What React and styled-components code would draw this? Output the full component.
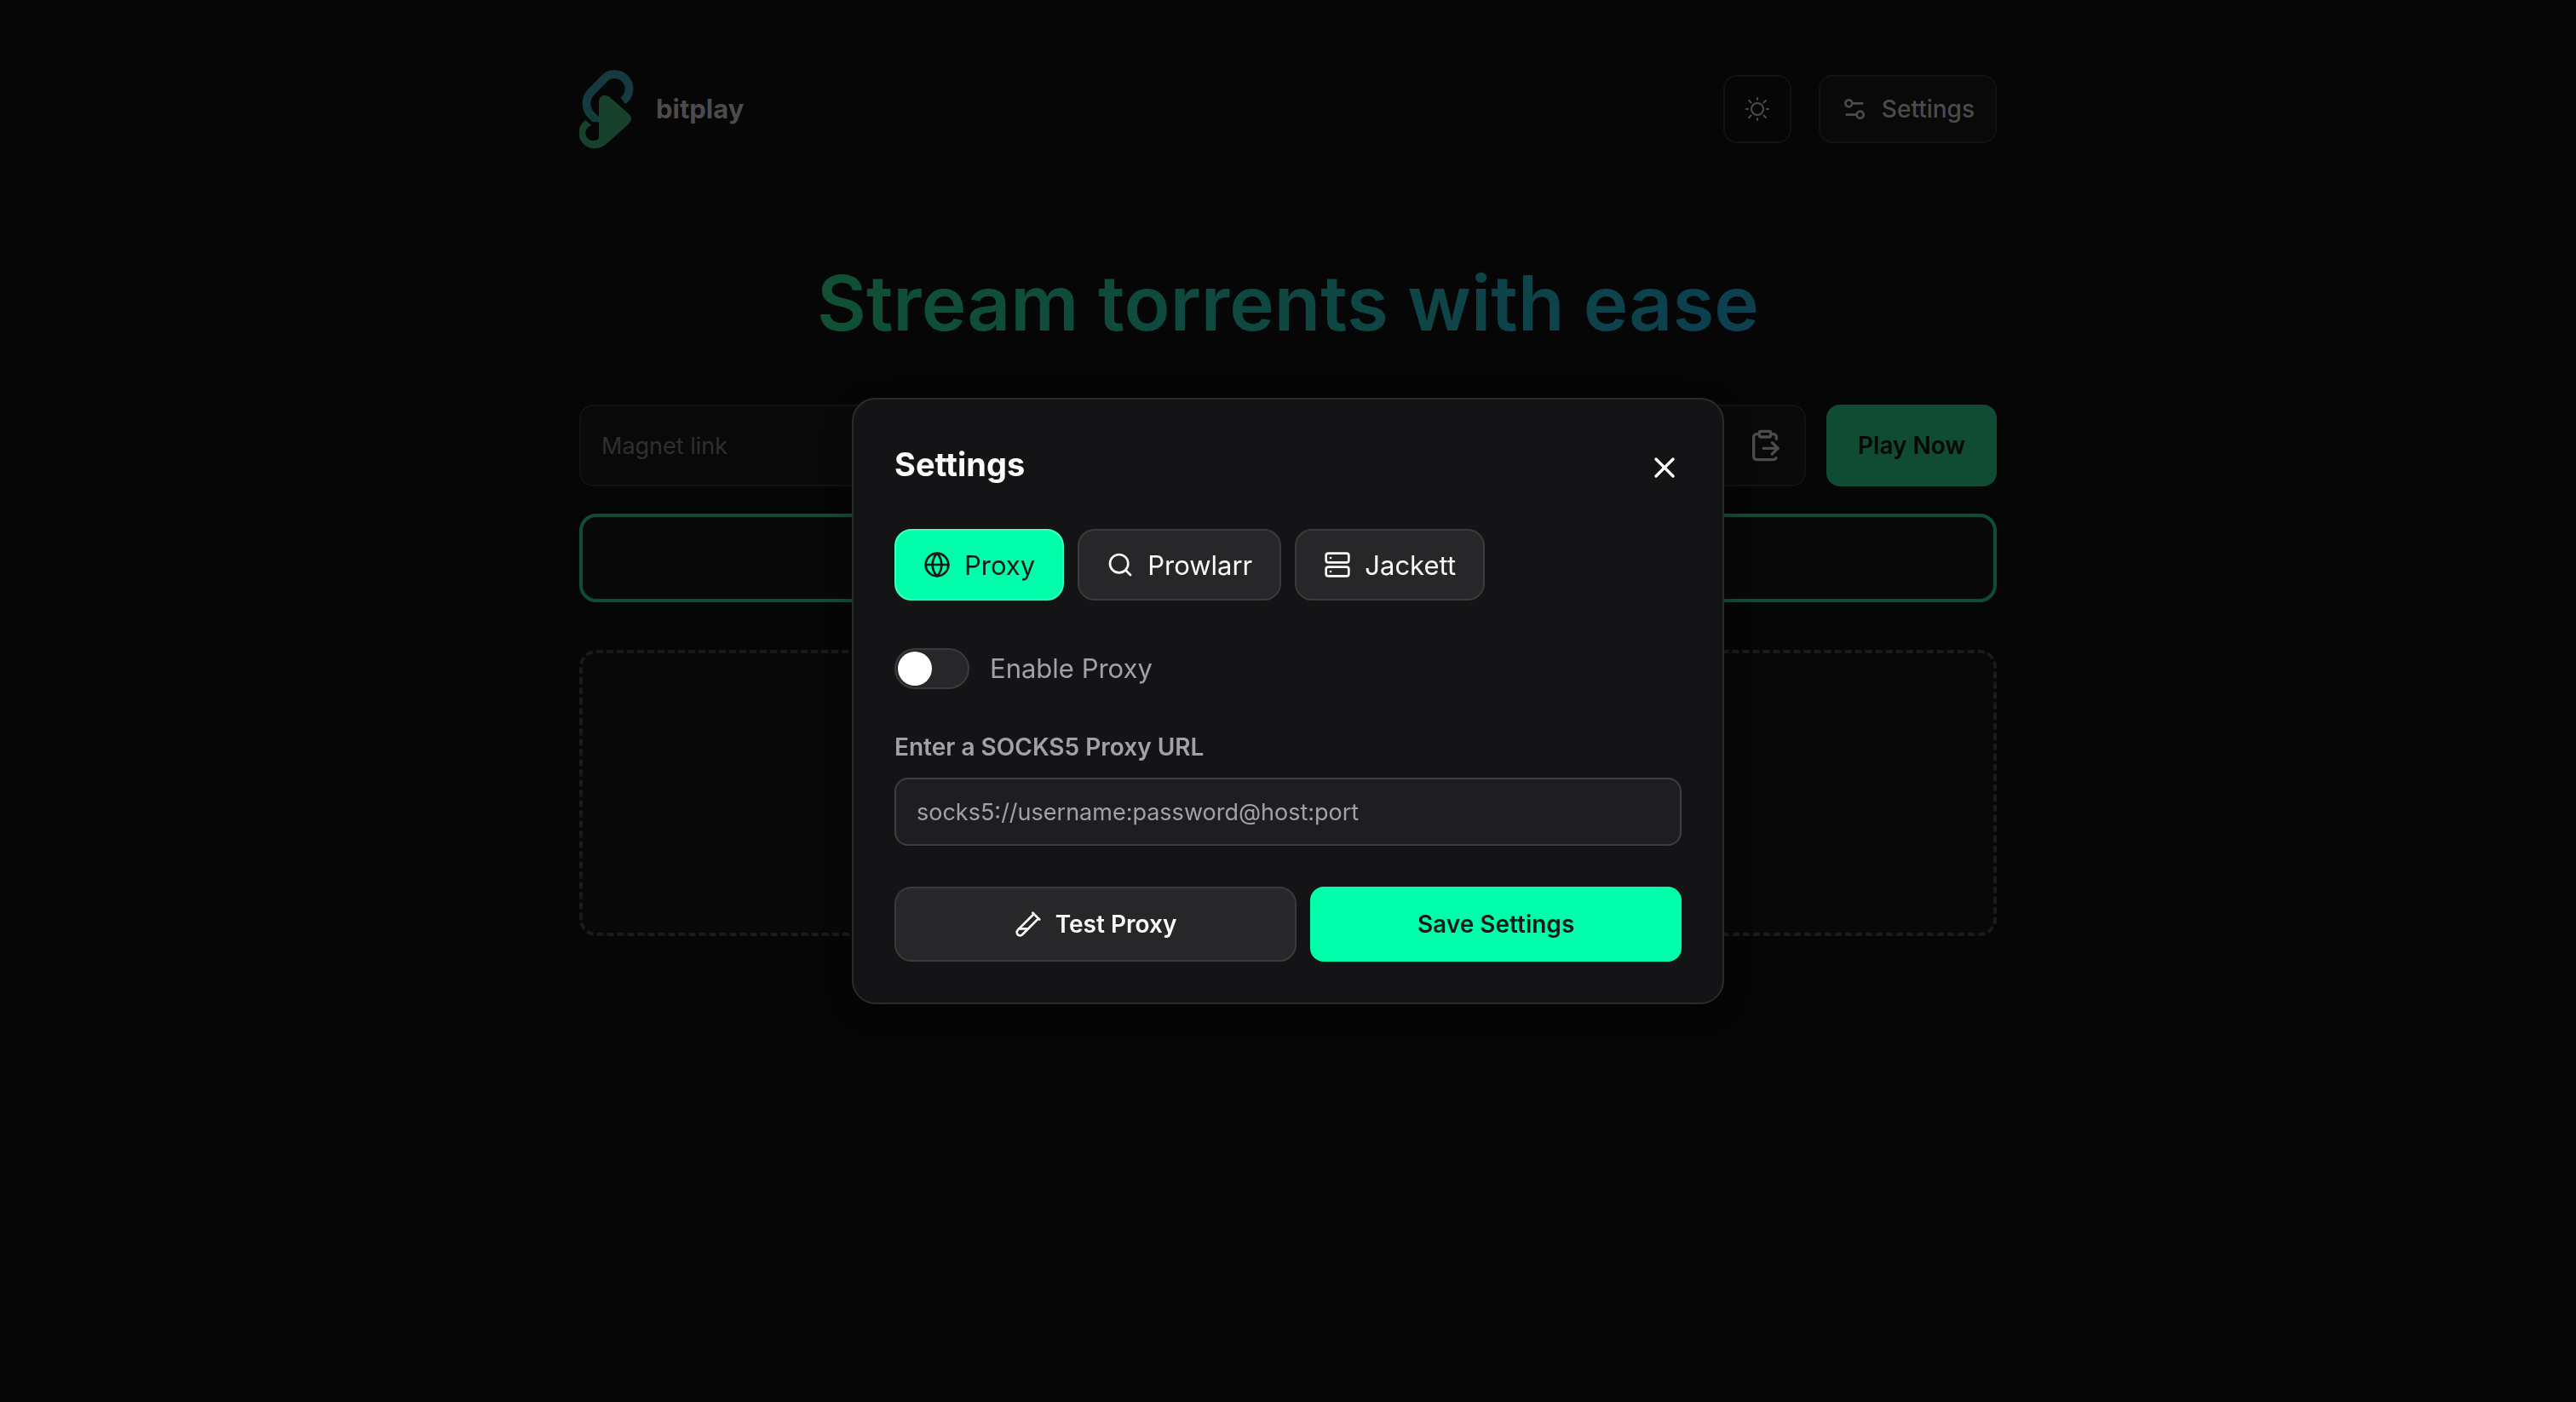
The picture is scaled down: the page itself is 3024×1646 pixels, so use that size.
import React, { useState } from "react";
import styled, { createGlobalStyle } from "styled-components";
import {
  ClipboardPaste,
  Globe,
  Search,
  Server,
  Settings2,
  TestTubeDiagonal,
  X,
} from "lucide-react";

const GlobalStyle = createGlobalStyle`
  *, *::before, *::after { box-sizing: border-box; }
  body {
    margin: 0;
    background: #060606;
    color: #fafafa;
    font-family: Inter, "Liberation Sans", sans-serif;
    font-size: 28px;
  }
  button, input { font: inherit; }
  button { cursor: pointer; }
`;

const Page = styled.main`
  min-height: 100vh;
  padding: 80px 48px;
`;

const Container = styled.div`
  max-width: 1664px;
  margin: 0 auto;
  display: flex;
  flex-direction: column;
`;

const Header = styled.header`
  display: flex;
  align-items: center;
  justify-content: space-between;
`;

const Brand = styled.a`
  display: flex;
  align-items: center;
  gap: 24px;
  color: #4b4b4b;
  font-size: 31px;
  font-weight: 700;
  line-height: 48px;
  text-decoration: none;
`;

const HeaderActions = styled.div`
  display: flex;
  gap: 32px;
`;

const HeaderButton = styled.button`
  display: flex;
  align-items: center;
  justify-content: center;
  gap: 16px;
  height: 80px;
  min-width: 80px;
  padding: 0 ${(p) => (p.$iconOnly ? "0" : "24px")};
  border: 2px solid #121212;
  border-radius: 16px;
  background: ${(p) => (p.$iconOnly ? "transparent" : "#090909")};
  color: #4b4b4b;
  font-weight: 500;
`;

const Title = styled.h1`
  align-self: center;
  margin: 120px 0 59px;
  background: linear-gradient(90deg, #105034, #0d3f50);
  background-clip: text;
  -webkit-background-clip: text;
  color: transparent;
  font-size: 89px;
  font-weight: 600;
  line-height: 120px;
`;

const MagnetForm = styled.form`
  display: flex;
  gap: 24px;
`;

const MagnetField = styled.div`
  flex: 1;
  display: flex;
  align-items: center;
  height: 96px;
  padding: 0 24px;
  border: 2px solid #121212;
  border-radius: 16px;
  background: #090909;
`;

const MagnetInput = styled.input`
  flex: 1;
  min-width: 0;
  padding: 0;
  border: 0;
  outline: 0;
  background: transparent;
  color: #4b4b4b;
  font-size: 27px;
  &::placeholder { color: #2f2f31; opacity: 1; }
`;

const PasteButton = styled.button`
  display: flex;
  padding: 0 2px;
  border: 0;
  background: transparent;
  color: #4b4b4b;
`;

const PlayButton = styled.button`
  width: 200px;
  padding: 0;
  border: 0;
  border-radius: 16px;
  background: #104c33;
  color: #070707;
  font-weight: 600;
`;

const SearchResult = styled.section`
  height: 104px;
  margin-top: 32px;
  border: 4px solid #104c33;
  border-radius: 20px;
  background: #080808;
`;

const DropZone = styled.section`
  height: 336px;
  margin-top: 56px;
  border: 4px dashed #1a1a1a;
  border-radius: 20px;
  background: #080808;
`;

const Backdrop = styled.div`
  position: fixed;
  inset: 0;
  display: flex;
  align-items: center;
  justify-content: center;
  padding: 48px;
`;

const Dialog = styled.section`
  width: 100%;
  max-width: 1024px;
  padding: 48px;
  border: 2px solid #2b2b2c;
  border-radius: 28px;
  background: #141416;
  box-shadow: 0 8px 32px rgba(0, 0, 0, 0.25);
`;

const DialogHeader = styled.div`
  display: flex;
  align-items: flex-end;
  justify-content: space-between;
`;

const DialogTitle = styled.h2`
  margin: 0;
  font-size: 38px;
  font-weight: 700;
  line-height: 56px;
`;

const CloseButton = styled.button`
  display: flex;
  align-items: center;
  height: 48px;
  padding: 0;
  border: 0;
  background: transparent;
  color: #fff;
`;

const Tabs = styled.div`
  display: flex;
  gap: 16px;
  margin-top: 48px;
`;

const Tab = styled.button`
  display: flex;
  align-items: center;
  gap: 16px;
  height: 84px;
  padding: 0 32px;
  border: 2px solid ${(p) => (p.$active ? "#40ffbf" : "#3a3a3c")};
  border-radius: 20px;
  background: ${(p) => (p.$active ? "#00ffaa" : "#27272a")};
  color: ${(p) => (p.$active ? "#18181b" : "#fafafa")};
  font-size: 31px;
`;

const ToggleRow = styled.label`
  display: flex;
  align-items: center;
  gap: 24px;
  width: fit-content;
  margin-top: 56px;
  color: #a1a1aa;
  font-size: 31px;
  line-height: 48px;
`;

const Toggle = styled.input`
  appearance: none;
  width: 88px;
  height: 48px;
  margin: 0;
  padding: 2px;
  border: 2px solid #3a3a3c;
  border-radius: 24px;
  background: #27272a;
  cursor: pointer;

  &::before {
    content: "";
    display: block;
    width: 40px;
    height: 40px;
    border-radius: 50%;
    background: #fff;
  }
  &:checked { background: #00ffaa; }
  &:checked::before { margin-left: auto; }
`;

const Field = styled.div`
  display: flex;
  flex-direction: column;
  gap: 16px;
  margin-top: 48px;
`;

const FieldLabel = styled.label`
  color: #a1a1aa;
  font-weight: 600;
  line-height: 40px;
`;

const FieldInput = styled.input`
  height: 80px;
  padding: 0 24px;
  border: 2px solid #3f3f42;
  border-radius: 16px;
  outline: 0;
  background: #1e1e20;
  color: #fafafa;
  font-size: 27px;
  &::placeholder { color: #a1a1aa; opacity: 1; }
`;

const DialogActions = styled.div`
  display: grid;
  grid-template-columns: 13fr 12fr;
  gap: 16px;
  margin-top: 48px;
`;

const ActionButton = styled.button`
  display: flex;
  align-items: center;
  justify-content: center;
  gap: 16px;
  height: 88px;
  padding: 0 32px;
  border: ${(p) => (p.$primary ? "0" : "2px solid #3a3a3c")};
  border-radius: ${(p) => (p.$primary ? "16px" : "20px")};
  background: ${(p) => (p.$primary ? "#00ffaa" : "#27272a")};
  color: ${(p) => (p.$primary ? "#18181b" : "#fafafa")};
  font-weight: 600;
`;

function Logo() {
  return (
    <svg width="66" height="96" viewBox="60 60 198 288" aria-hidden="true">
      <defs>
        <clipPath id="link-end">
          <path d="M60 50H260V250H60Z" />
        </clipPath>
        <linearGradient id="link" x1="0" y1="0" x2="0" y2="1">
          <stop offset="0" stopColor="#153a3f" />
          <stop offset="1" stopColor="#143c3b" />
        </linearGradient>
      </defs>
      <path
        clipPath="url(#link-end)"
        d="M214 175A51 51 0 1 0 154 91L103 143A58 58 0 0 0 103 226L140 262"
        fill="none"
        stroke="url(#link)"
        strokeWidth="29"
      />
      <path
        d="M82 243A55 55 0 0 0 115 343Q136 343 155 328L235 256Q252 239 235 221L168 163Q158 155 150 155Q129 157 129 178V303Q126 315 113 315A27 27 0 0 1 103 262Z"
        fill="#17412a"
      />
    </svg>
  );
}

function SunIcon() {
  return (
    <svg
      width="32"
      height="32"
      viewBox="0 0 32 32"
      fill="none"
      stroke="currentColor"
      strokeWidth="2"
      strokeLinecap="round"
      aria-hidden="true"
    >
      <circle cx="16" cy="16" r="7" />
      <path d="M16 3v2M16 27v2M3 16h2M27 16h2M6 6l2.500 2.500M23.500 23.500L26 26M6 26l2.500-2.500M23.500 8.500L26 6" />
    </svg>
  );
}

const TABS = [
  { name: "Proxy", Icon: Globe },
  { name: "Prowlarr", Icon: Search },
  { name: "Jackett", Icon: Server },
];

function SettingsDialog() {
  const [tab, setTab] = useState("Proxy");
  return (
    <Backdrop>
      <Dialog role="dialog" aria-labelledby="settings-title">
        <DialogHeader>
          <DialogTitle id="settings-title">Settings</DialogTitle>
          <CloseButton type="button" aria-label="Close">
            <X size={40} />
          </CloseButton>
        </DialogHeader>
        <Tabs role="tablist">
          {TABS.map(({ name, Icon }) => (
            <Tab
              key={name}
              type="button"
              role="tab"
              aria-selected={tab === name}
              $active={tab === name}
              onClick={() => setTab(name)}
            >
              <Icon size={32} />
              {name}
            </Tab>
          ))}
        </Tabs>
        <ToggleRow>
          <Toggle type="checkbox" />
          Enable Proxy
        </ToggleRow>
        <Field>
          <FieldLabel htmlFor="proxy-url">Enter a SOCKS5 Proxy URL</FieldLabel>
          <FieldInput
            id="proxy-url"
            type="text"
            placeholder="socks5://username:password@host:port"
          />
        </Field>
        <DialogActions>
          <ActionButton type="button">
            <TestTubeDiagonal size={32} />
            Test Proxy
          </ActionButton>
          <ActionButton type="button" $primary>
            Save Settings
          </ActionButton>
        </DialogActions>
      </Dialog>
    </Backdrop>
  );
}

export default function App() {
  return (
    <>
      <GlobalStyle />
      <Page>
        <Container>
          <Header>
            <Brand href="#">
              <Logo />
              bitplay
            </Brand>
            <HeaderActions>
              <HeaderButton type="button" $iconOnly aria-label="Toggle theme">
                <SunIcon />
              </HeaderButton>
              <HeaderButton type="button">
                <Settings2 size={32} />
                Settings
              </HeaderButton>
            </HeaderActions>
          </Header>
          <Title>Stream torrents with ease</Title>
          <MagnetForm onSubmit={(e) => e.preventDefault()}>
            <MagnetField>
              <MagnetInput type="text" aria-label="Magnet link" placeholder="Magnet link" />
              <PasteButton type="button" aria-label="Paste">
                <ClipboardPaste size={40} />
              </PasteButton>
            </MagnetField>
            <PlayButton type="submit">Play Now</PlayButton>
          </MagnetForm>
          <SearchResult />
          <DropZone />
        </Container>
      </Page>
      <SettingsDialog />
    </>
  );
}
